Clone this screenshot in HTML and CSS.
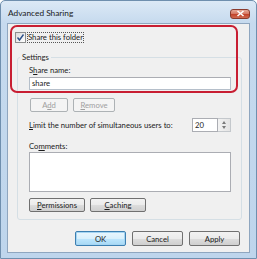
FILE: index.html
```html
<!DOCTYPE html>
<html>
<head>
<meta charset="utf-8">
<title>Advanced Sharing</title>
<link rel="stylesheet" href="styles.css">
</head>
<body>

	<div class="window">
		<div class="titlebar">
			<span class="title">Advanced Sharing</span>
			<span class="close-btn">
				<svg width="9" height="7" viewBox="0 0 9 7"><path d="M1.5 1 L7.5 6 M7.5 1 L1.5 6" stroke="#fff" stroke-width="1.6"/></svg>
			</span>
		</div>
		<div class="client">
			<div class="check-row">
				<span class="checkbox">
					<svg width="9" height="9" viewBox="0 0 9 9"><path d="M1.5 4.5 L3.5 7 L7.5 1.5" fill="none" stroke="#2a4f8a" stroke-width="1.4"/></svg>
				</span>
				<span class="focus-text">Share this folder</span>
			</div>

			<fieldset class="settings">
				<legend>Settings</legend>
				<div class="field-label">S<u>h</u>are name:</div>
				<div class="textbox">share</div>
				<div class="btn-row">
					<button class="btn btn-add" disabled>A<u>d</u>d</button>
					<button class="btn btn-remove" disabled><u>R</u>emove</button>
				</div>
				<div class="limit-row">
					<span><u>L</u>imit the number of simultaneous users to:</span>
					<div class="spin">
						<div class="spin-value">20</div>
						<div class="spin-arrows">
							<span class="arrow-up"></span>
							<span class="arrow-down"></span>
						</div>
					</div>
				</div>
				<div class="field-label comments-label">Co<u>m</u>ments:</div>
				<div class="textarea"></div>
				<div class="btn-row btn-row-low">
					<button class="btn btn-perm"><u>P</u>ermissions</button>
					<button class="btn btn-perm"><u>C</u>aching</button>
				</div>
			</fieldset>

			<div class="footer">
				<button class="btn btn-dlg btn-default">OK</button>
				<button class="btn btn-dlg">Cancel</button>
				<button class="btn btn-dlg">Apply</button>
			</div>
		</div>

		<div class="highlight"></div>
	</div>

</body>
</html>
```

FILE: styles.css
```css
body {
	margin: 0;
	background: #ffffff;
	font-family: Lato, "Noto Sans", sans-serif;
	font-size: 7.7px;
	color: #1b1b1b;
}

.window {
	position: relative;
	width: 257px;
	height: 259px;
	box-sizing: border-box;
	border: 1px solid #6f8fae;
	border-radius: 5px 5px 0 0;
	background: linear-gradient(to bottom, #dce9f6 0px, #c6daee 22px, #bed5ec 100%);
	padding: 0 6px 6px 6px;
}

.titlebar {
	height: 22px;
	display: flex;
	align-items: center;
	justify-content: space-between;
}

.title {
	padding-left: 1px;
	padding-top: 2px;
	font-size: 8.3px;
	color: #1a1a1a;
}

.close-btn {
	width: 20px;
	height: 10px;
	margin-right: 0;
	margin-top: 3px;
	box-sizing: border-box;
	border: 1px solid #8a3b2e;
	border-radius: 3px;
	background: linear-gradient(to bottom, #e6aa9a 0%, #d77a65 45%, #c2432b 55%, #d06a50 100%);
	display: flex;
	align-items: center;
	justify-content: center;
}

.client {
	height: 230px;
	box-sizing: border-box;
	border: 1px solid #8fa6bf;
	background: #f0f0f0;
}

.check-row {
	margin-top: 7px;
	margin-left: 7px;
	height: 12px;
	display: flex;
	align-items: center;
}

.checkbox {
	width: 11px;
	height: 11px;
	box-sizing: border-box;
	border: 1px solid #8e8f8f;
	background: linear-gradient(to bottom right, #dcdcdc, #ffffff);
	display: flex;
	align-items: center;
	justify-content: center;
}

.focus-text {
	margin-left: 1px;
	padding: 0 1px;
	line-height: 11px;
	outline: 1px dotted #555;
	outline-offset: -1px;
}

.settings {
	width: 225px;
	box-sizing: border-box;
	margin: 8px 0 0 9px;
	padding: 1px 10px 7px 11px;
	border: 1px solid #d5dfe5;
	border-radius: 3px;
}

.settings legend {
	margin-left: -9px;
	padding: 0 2px;
	line-height: 12px;
}

.field-label {
	line-height: 12px;
}

.textbox {
	margin-top: 1px;
	width: 202px;
	height: 13px;
	box-sizing: border-box;
	border: 1px solid #b5bfca;
	border-top-color: #abadb3;
	background: #fff;
	padding-left: 2px;
	line-height: 11px;
}

.btn-row {
	display: flex;
	gap: 5px;
	margin-top: 8px;
	margin-left: 1px;
}

.btn {
	height: 14px;
	box-sizing: border-box;
	border: 1px solid #707070;
	border-radius: 2px;
	background: linear-gradient(to bottom, #f2f2f2 0%, #ebebeb 50%, #dddddd 51%, #cfcfcf 100%);
	font-family: inherit;
	font-size: 7.7px;
	color: #1b1b1b;
	padding: 0;
	line-height: 12px;
}

.btn:disabled {
	border-color: #adb2b5;
	background: #f4f4f4;
	color: #a0a0a0;
}

.btn-add {
	width: 38px;
}

.btn-remove {
	width: 42px;
}

.limit-row {
	margin-top: 6px;
	display: flex;
	align-items: center;
	justify-content: space-between;
	width: 202px;
}

.spin {
	display: flex;
	height: 14px;
}

.spin-value {
	width: 26px;
	box-sizing: border-box;
	border: 1px solid #abadb3;
	background: #fff;
	padding-left: 2px;
	line-height: 12px;
}

.spin-arrows {
	width: 13px;
	box-sizing: border-box;
	border: 1px solid #c4c8cc;
	border-left: none;
	background: linear-gradient(to right, #f3f3f3, #e4e4e4);
	display: flex;
	flex-direction: column;
	align-items: center;
	justify-content: space-around;
	padding: 1px 0;
}

.arrow-up {
	width: 0;
	height: 0;
	border-left: 2.5px solid transparent;
	border-right: 2.5px solid transparent;
	border-bottom: 3px solid #7a7a7a;
}

.arrow-down {
	width: 0;
	height: 0;
	border-left: 2.5px solid transparent;
	border-right: 2.5px solid transparent;
	border-top: 3px solid #7a7a7a;
}

.comments-label {
	margin-top: 8px;
}

.textarea {
	width: 202px;
	height: 40px;
	box-sizing: border-box;
	border: 1px solid #abadb3;
	background: #fff;
}

.btn-row-low {
	margin-top: 6px;
	margin-left: 0;
}

.btn-perm {
	width: 56px;
}

.footer {
	margin-top: 11px;
	display: flex;
	justify-content: flex-end;
	gap: 6px;
	padding-right: 9px;
}

.btn-dlg {
	width: 51px;
	height: 15px;
}

.btn-default {
	border-color: #3c7fb1;
	box-shadow: inset 0 0 0 1px #a6d5f2;
	background: linear-gradient(to bottom, #eaf6fd 0%, #d9f0fc 50%, #bee6fd 51%, #a7d9f5 100%);
}

.highlight {
	position: absolute;
	left: 9px;
	top: 24px;
	width: 228px;
	height: 68px;
	box-sizing: border-box;
	border: 2px solid #c81e32;
	border-radius: 7px;
}
```
